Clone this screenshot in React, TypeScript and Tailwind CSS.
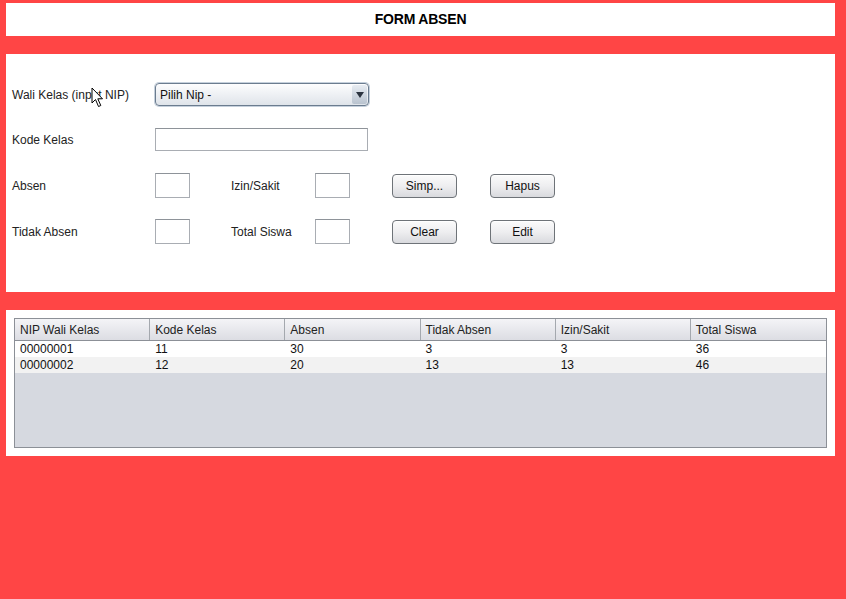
import React from 'react';

const columns = ['NIP Wali Kelas', 'Kode Kelas', 'Absen', 'Tidak Absen', 'Izin/Sakit', 'Total Siswa'];

const rows = [
  ['00000001', '11', '30', '3', '3', '36'],
  ['00000002', '12', '20', '13', '13', '46'],
];

function TextBox({ className = '' }: { className?: string }) {
  return <div className={`border border-[#a9adb3] border-t-[#8e9399] bg-white ${className}`} />;
}

function Button({ label }: { label: string }) {
  return (
    <div className="flex h-[24px] w-[65px] items-center justify-center rounded-[4px] border border-[#6e7378] bg-gradient-to-b from-[#fbfbfb] via-[#eeeef0] to-[#d9dade] text-[12px] text-[#111] shadow-[inset_0_1px_0_#fff]">
      {label}
    </div>
  );
}

function Cursor() {
  return (
    <svg className="absolute left-[91px] top-[87px]" width="14" height="21" viewBox="0 0 14 21">
      <path d="M1 1 L1 16 L4.5 12.5 L7.5 19.5 L9.8 18.5 L6.8 11.8 L11.5 11.8 Z" fill="#fff" stroke="#000" strokeWidth="1" strokeLinejoin="round" />
    </svg>
  );
}

export default function App() {
  return (
    <div className="relative flex h-[599px] w-[846px] flex-col gap-[18px] bg-[#ff4545] px-[6px] pt-[3px] font-['Liberation_Sans',Arial,sans-serif] text-[12px] text-[#222]">
      {/* header */}
      <div className="flex h-[33px] w-[829px] items-center justify-center bg-white">
        <span className="text-[14px] font-bold tracking-[-0.2px] text-black">FORM ABSEN</span>
      </div>

      {/* form */}
      <div className="flex h-[238px] w-[829px] flex-col bg-white pl-[6px] pt-[29px]">
        <div className="flex h-[23px] items-center">
          <span className="w-[143px]">Wali Kelas (input NIP)</span>
          <div className="flex h-[23px] w-[214px] items-center rounded-[4px] border border-[#6b7c8f] bg-gradient-to-b from-[#fdfdfe] to-[#dfe4ea] shadow-[0_0_0_1px_#c5d0dc]">
            <span className="flex-1 pl-[4px] text-[#111]">Pilih Nip -</span>
            <div className="mr-[1px] flex h-[19px] w-[15px] items-center justify-center rounded-[2px] bg-gradient-to-b from-[#e7ecf2] to-[#b9c3cf]">
              <svg width="8" height="6" viewBox="0 0 8 6">
                <path d="M0 0 H8 L4 6 Z" fill="#2c3440" />
              </svg>
            </div>
          </div>
        </div>

        <div className="mt-[22px] flex h-[23px] items-center">
          <span className="w-[143px]">Kode Kelas</span>
          <TextBox className="h-[23px] w-[213px]" />
        </div>

        <div className="mt-[22px] flex h-[25px] items-center">
          <span className="w-[143px]">Absen</span>
          <TextBox className="h-[25px] w-[35px]" />
          <span className="ml-[41px] w-[84px]">Izin/Sakit</span>
          <TextBox className="h-[25px] w-[35px]" />
          <div className="ml-[42px]">
            <Button label="Simp..." />
          </div>
          <div className="ml-[33px]">
            <Button label="Hapus" />
          </div>
        </div>

        <div className="mt-[21px] flex h-[25px] items-center">
          <span className="w-[143px]">Tidak Absen</span>
          <TextBox className="h-[25px] w-[35px]" />
          <span className="ml-[41px] w-[84px]">Total Siswa</span>
          <TextBox className="h-[25px] w-[35px]" />
          <div className="ml-[42px]">
            <Button label="Clear" />
          </div>
          <div className="ml-[33px]">
            <Button label="Edit" />
          </div>
        </div>
      </div>

      {/* table */}
      <div className="h-[146px] w-[829px] bg-white p-[8px]">
        <div className="flex h-[130px] w-[813px] flex-col border border-[#8c9097] bg-[#d6d9e0]">
          <div className="grid h-[22px] grid-cols-6 border-b border-[#8c9097] bg-gradient-to-b from-[#f4f4f7] to-[#dcdde3]">
            {columns.map((c, i) => (
              <div key={c} className={`flex items-center pl-[5px] text-[#222] ${i < 5 ? 'border-r border-[#a4a8ae]' : ''}`}>
                {c}
              </div>
            ))}
          </div>
          {rows.map((r, ri) => (
            <div key={ri} className={`grid h-[16px] grid-cols-6 ${ri === 0 ? 'bg-white' : 'bg-[#f2f2f2]'}`}>
              {r.map((v, ci) => (
                <div key={ci} className="flex items-center pl-[5px] leading-none text-[#111]">
                  {v}
                </div>
              ))}
            </div>
          ))}
        </div>
      </div>

      <Cursor />
    </div>
  );
}
